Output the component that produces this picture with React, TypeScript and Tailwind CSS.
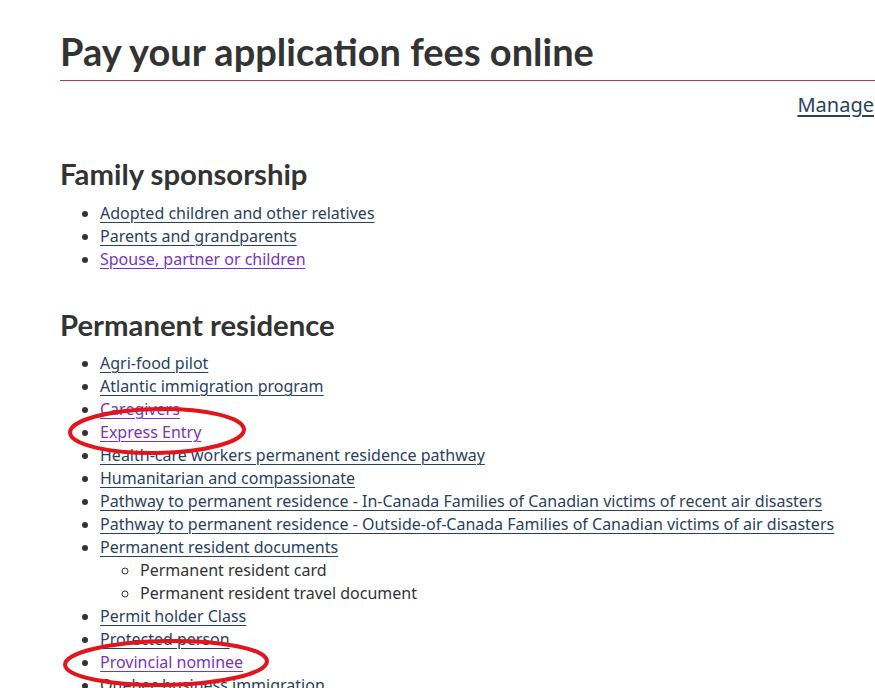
const family = [
  { label: "Adopted children and other relatives" },
  { label: "Parents and grandparents" },
  { label: "Spouse, partner or children", visited: true },
];

type Item = { label: string; visited?: boolean; sub?: string[] };

const residence: Item[] = [
  { label: "Agri-food pilot" },
  { label: "Atlantic immigration program" },
  { label: "Caregivers", visited: true },
  { label: "Express Entry", visited: true },
  { label: "Health-care workers permanent residence pathway" },
  { label: "Humanitarian and compassionate" },
  { label: "Pathway to permanent residence - In-Canada Families of Canadian victims of recent air disasters" },
  { label: "Pathway to permanent residence - Outside-of-Canada Families of Canadian victims of air disasters" },
  {
    label: "Permanent resident documents",
    sub: ["Permanent resident card", "Permanent resident travel document"],
  },
  { label: "Permit holder Class" },
  { label: "Protected person" },
  { label: "Provincial nominee", visited: true },
  { label: "Quebec business immigration" },
];

function LinkList({ items, className }: { items: Item[]; className: string }) {
  return (
    <ul className={"list-disc pl-[40px] " + className}>
      {items.map((item) => (
        <li key={item.label} className="leading-[23px]">
          <a
            href="#"
            className={
              "underline underline-offset-[3px] decoration-1 " +
              (item.visited ? "text-[#7834bc]" : "text-[#284162]")
            }
          >
            {item.label}
          </a>
          {item.sub && (
            <ul className="list-[circle] pl-[40px]">
              {item.sub.map((s) => (
                <li key={s} className="leading-[23px]">
                  {s}
                </li>
              ))}
            </ul>
          )}
        </li>
      ))}
    </ul>
  );
}

export default function App() {
  return (
    <div
      className="relative bg-white text-[#333] text-[16px] h-[688px] overflow-hidden"
      style={{ fontFamily: '"Noto Sans", sans-serif' }}
    >
      <div className="pl-[60px] pt-[30px]">
        <div className="w-[815px]">
          <h1
            className="text-[38px] leading-[42px] font-bold pb-[8px] border-b border-[#af3c43]"
            style={{ fontFamily: "Lato, sans-serif" }}
          >
            Pay your application fees online
          </h1>
          <div className="text-right mt-[12px] leading-[23px] pr-px">
            <a href="#" className="text-[#284162] text-[20px] underline underline-offset-[3px]">
              Manage
            </a>
          </div>

          <h2
            className="text-[29.3px] leading-[32px] font-bold mt-[40px]"
            style={{ fontFamily: "Lato, sans-serif" }}
          >
            Family sponsorship
          </h2>
          <LinkList items={family} className="mt-[12px]" />

          <h2
            className="text-[29.3px] leading-[32px] font-bold mt-[38px]"
            style={{ fontFamily: "Lato, sans-serif" }}
          >
            Permanent residence
          </h2>
          <LinkList items={residence} className="mt-[11px]" />
        </div>
      </div>

      {/* hand-drawn annotation circles */}
      <svg className="absolute inset-0 pointer-events-none" width="875" height="688">
        <ellipse cx="157" cy="431" rx="87" ry="22" fill="none" stroke="#e3141b" strokeWidth="4" transform="rotate(-1 157 431)" />
        <ellipse cx="166" cy="663" rx="101" ry="22" fill="none" stroke="#e3141b" strokeWidth="4" transform="rotate(-1 166 663)" />
      </svg>
    </div>
  );
}
